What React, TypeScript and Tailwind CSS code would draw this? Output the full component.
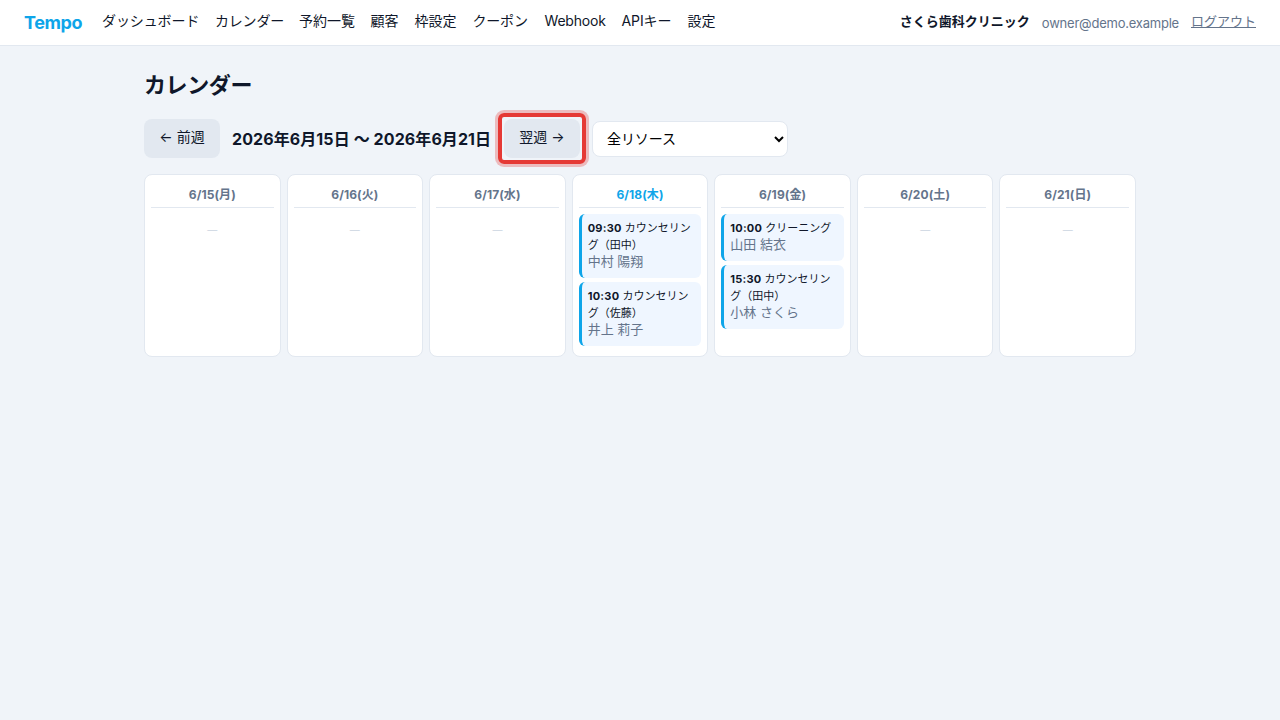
type Booking = { time: string; menu: string; customer: string };
type Day = { label: string; today?: boolean; bookings: Booking[] };

const navItems = [
  { label: 'ダッシュボード', width: 'w-[97px] tracking-[-0.1px]' },
  { label: 'カレンダー', width: 'w-[68px] tracking-[-0.2px]' },
  { label: '予約一覧', width: 'w-[55.5px]' },
  { label: '顧客', width: 'w-7' },
  { label: '枠設定', width: 'w-[42px]' },
  { label: 'クーポン', width: 'w-14 tracking-[-0.2px]' },
  { label: 'Webhook', width: 'w-[61px] tracking-[-0.2px]' },
  { label: 'APIキー', width: 'w-[50px] tracking-[-0.1px]' },
  { label: '設定', width: 'w-7' },
];

const days: Day[] = [
  { label: '6/15(月)', bookings: [] },
  { label: '6/16(火)', bookings: [] },
  { label: '6/17(水)', bookings: [] },
  {
    label: '6/18(木)',
    today: true,
    bookings: [
      { time: '09:30', menu: 'カウンセリング（田中）', customer: '中村 陽翔' },
      { time: '10:30', menu: 'カウンセリング（佐藤）', customer: '井上 莉子' },
    ],
  },
  {
    label: '6/19(金)',
    bookings: [
      { time: '10:00', menu: 'クリーニング', customer: '山田 結衣' },
      { time: '15:30', menu: 'カウンセリング（田中）', customer: '小林 さくら' },
    ],
  },
  { label: '6/20(土)', bookings: [] },
  { label: '6/21(日)', bookings: [] },
];

function Header() {
  return (
    <header className="flex h-[46px] items-center border-b border-[#e2e8f0] bg-white px-6">
      <a href="#" className="w-[58px] text-lg leading-[45px] font-bold tracking-[-0.4px] text-[#0ea5e9]">Tempo</a>
      <nav className="ml-5 flex gap-4 pb-[3px] text-sm">
        {navItems.map((item) => (
          <a key={item.label} href="#" className={`${item.width} whitespace-nowrap`}>
            {item.label}
          </a>
        ))}
      </nav>
      <div className="ml-auto flex items-center gap-3 text-[13px] leading-5">
        <strong className="pb-[3px] font-bold">さくら歯科クリニック</strong>
        <span className="pt-px tracking-[-0.22px] text-[#64748b]">owner@demo.example</span>
        <a href="#" className="pb-[3px] text-[#64748b] underline">ログアウト</a>
      </div>
    </header>
  );
}

function BookingCard({ booking }: { booking: Booking }) {
  return (
    <div className="mb-1 rounded-md border-l-3 border-[#0ea5e9] bg-[#eff6ff] px-1.5 pt-1.5 pb-2 text-[11px] leading-[17px]">
      <strong className="font-bold tracking-[0.25px]">{booking.time}</strong> {booking.menu}
      <div className="-mt-0.5 text-[13px] leading-[18px] text-[#64748b]">{booking.customer}</div>
    </div>
  );
}

function DayColumn({ day }: { day: Day }) {
  return (
    <div className="min-h-[183px] rounded-lg border border-[#e2e8f0] bg-white p-1.5">
      <div
        className={`mb-1.5 h-[27px] border-b border-[#e2e8f0] text-center text-xs leading-[27px] font-bold tracking-[0.1px] ${
          day.today ? 'text-[#0ea5e9]' : 'text-[#64748b]'
        }`}
      >
        {day.label}
      </div>
      {day.bookings.length === 0 && (
        <div className="pt-[7px] text-center text-[10px] leading-[18px] text-[#cbd5e1]">—</div>
      )}
      {day.bookings.map((booking) => (
        <BookingCard key={booking.time} booking={booking} />
      ))}
    </div>
  );
}

export default function App() {
  return (
    <div className="min-h-screen bg-[#f0f4f9] font-[Inter,'Noto_Sans_CJK_JP',sans-serif] text-[#0f172a]">
      <Header />
      <main className="mx-auto w-[992px] pt-[23px]">
        <h1 className="text-[22px] leading-8 font-bold tracking-[-0.4px]">カレンダー</h1>
        <div className="mt-[18px] flex h-[39px] items-center">
          <button className="h-[39px] w-[76px] rounded-lg bg-[#e2e8f0] pb-[3px] text-sm whitespace-nowrap">← 前週</button>
          <strong className="ml-3 w-[260px] text-base font-bold tracking-[0.09px] whitespace-nowrap">
            2026年6月15日 〜 2026年6月21日
          </strong>
          <button className="relative ml-3 h-[39px] w-[76px] rounded-lg bg-[#e2e8f0] pb-[3px] text-sm whitespace-nowrap">
            翌週 →
            <span className="absolute -inset-1.5 rounded-md border-4 border-[#e53935] ring-3 ring-[#e53935]/30" />
          </button>
          <select className="ml-3 h-9 w-[196px] rounded-lg border border-[#e2e8f0] bg-white px-2.5 text-sm tracking-[-0.1px] text-black">
            <option>全リソース</option>
          </select>
        </div>
        <div className="mt-4 grid grid-cols-7 gap-1.5">
          {days.map((day) => (
            <DayColumn key={day.label} day={day} />
          ))}
        </div>
      </main>
    </div>
  );
}
